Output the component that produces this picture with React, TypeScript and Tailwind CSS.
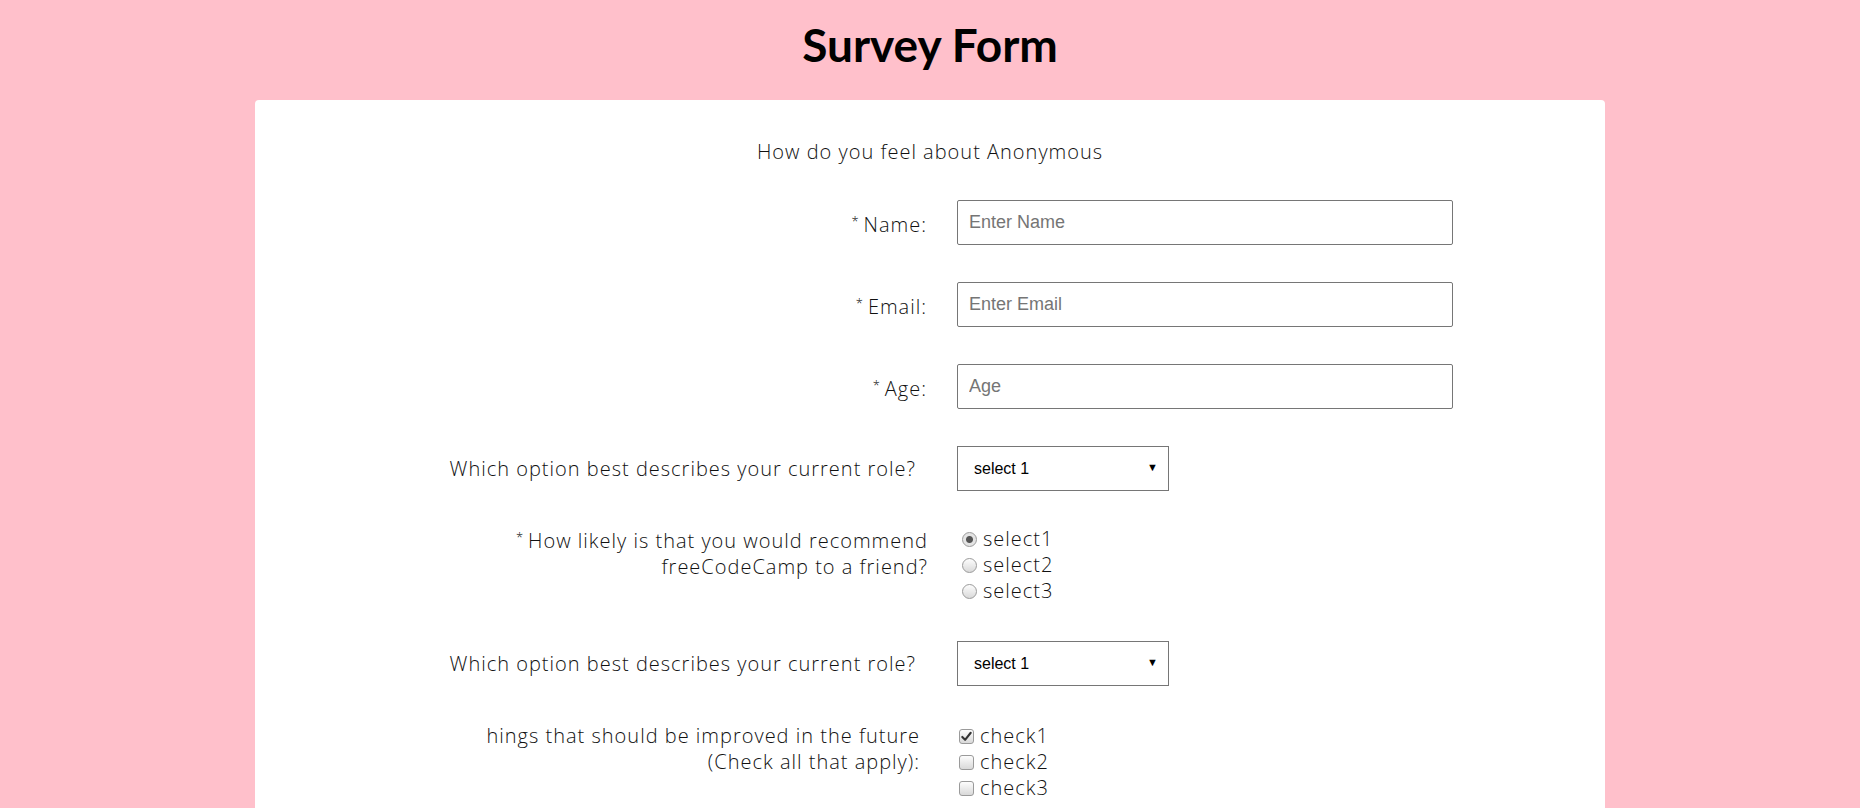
import React from 'react';

const bodyFont = { fontFamily: '"Open Sans", Lato, sans-serif' };

function Star() {
  return <span className="text-[13px] align-[6px] mr-[4px]">*</span>;
}

function Row({ label, children, labelClass = '', top = false }: { label: React.ReactNode; children: React.ReactNode; labelClass?: string; top?: boolean }) {
  return (
    <div className={`grid grid-cols-[672px_1fr] gap-x-[30px] ${top ? 'items-start' : 'items-center'}`}>
      <div className={`text-right text-[20px] leading-[26px] font-light tracking-[1px] text-[#111] ${labelClass}`}>{label}</div>
      <div>{children}</div>
    </div>
  );
}

function TextInput({ placeholder }: { placeholder: string }) {
  return (
    <input
      type="text"
      placeholder={placeholder}
      className="w-[496px] h-[45px] border border-[#767676] rounded-[2px] px-[11px] text-[18px] text-[#333] placeholder:text-[#757575] outline-none"
      style={{ fontFamily: '"Liberation Sans", Arial, sans-serif' }}
    />
  );
}

function Select() {
  return (
    <div className="relative w-[212px] h-[45px]">
      <select
        defaultValue="1"
        className="appearance-none w-full h-full border border-[#767676] bg-white pl-[16px] text-[16px] text-black outline-none"
        style={{ fontFamily: '"Liberation Sans", Arial, sans-serif' }}
      >
        <option value="1">select 1</option>
        <option value="2">select 2</option>
        <option value="3">select 3</option>
      </select>
      <span className="pointer-events-none absolute right-[11px] top-[13px] text-[11px] text-black">▼</span>
    </div>
  );
}

export default function App() {
  return (
    <div className="min-h-screen bg-[#ffc0cb]" style={bodyFont}>
      <header className="h-[100px] flex items-center justify-center pb-[10px]">
        <h1 className="text-[46px] font-bold text-black leading-none" style={{ fontFamily: 'Lato, sans-serif' }}>Survey Form</h1>
      </header>

      <main className="w-[1350px] mx-auto bg-white rounded-t-[4px] pt-[39px] pb-[60px]">
        <p className="text-center text-[20px] leading-[26px] font-light tracking-[1px] text-[#111]">How do you feel about Anonymous</p>

        <form className="flex flex-col gap-[37px] mt-[35px]">
          <Row label={<><Star />Name:</>}>
            <TextInput placeholder="Enter Name" />
          </Row>
          <Row label={<><Star />Email:</>}>
            <TextInput placeholder="Enter Email" />
          </Row>
          <Row label={<><Star />Age:</>}>
            <TextInput placeholder="Age" />
          </Row>
          <Row label="Which option best describes your current role?" labelClass="pr-[11px]">
            <Select />
          </Row>
          <div className="-mt-[4px]">
            <Row
              top
              labelClass="-mr-[1px]"
              label={<><Star />How likely is that you would recommend<br />freeCodeCamp to a friend?</>}
            >
              <div className="flex flex-col pt-[2px]">
                {['select1', 'select2', 'select3'].map((s, i) => (
                  <label key={s} className="flex items-center h-[26px] text-[20px] font-light tracking-[1px] text-[#111]">
                    <input
                      type="radio"
                      name="rec"
                      defaultChecked={i === 0}
                      className="appearance-none w-[15px] h-[15px] ml-[5px] mr-[6px] rounded-full border border-[#9a9a9a] bg-linear-to-b from-[#fdfdfd] to-[#d9d9d9] checked:bg-[radial-gradient(circle,#555_0_3px,#e4e4e4_4px)]"
                    />
                    {s}
                  </label>
                ))}
              </div>
            </Row>
          </div>
          <Row label="Which option best describes your current role?" labelClass="pr-[11px]">
            <Select />
          </Row>
          <Row
            top
            labelClass="pr-[7px]"
            label={<>hings that should be improved in the future<br />(Check all that apply):</>}
          >
            <div className="flex flex-col">
              {['check1', 'check2', 'check3'].map((s, i) => (
                <label key={s} className="flex items-center h-[26px] text-[20px] font-light tracking-[1px] text-[#111]">
                  <span className="relative ml-[2px] mr-[6px] w-[15px] h-[15px]">
                    <input
                      type="checkbox"
                      defaultChecked={i === 0}
                      className="peer appearance-none block w-[15px] h-[15px] rounded-[3px] border border-[#9a9a9a] bg-linear-to-b from-[#fdfdfd] to-[#d9d9d9]"
                    />
                    <svg viewBox="0 0 16 16" className="hidden peer-checked:block absolute inset-0 w-[15px] h-[15px] pointer-events-none">
                      <path d="M3.5 8.5 L6.5 11.5 L12.5 4" fill="none" stroke="#333" strokeWidth="2.2" strokeLinecap="round" strokeLinejoin="round" />
                    </svg>
                  </span>
                  {s}
                </label>
              ))}
            </div>
          </Row>
        </form>
      </main>
    </div>
  );
}
